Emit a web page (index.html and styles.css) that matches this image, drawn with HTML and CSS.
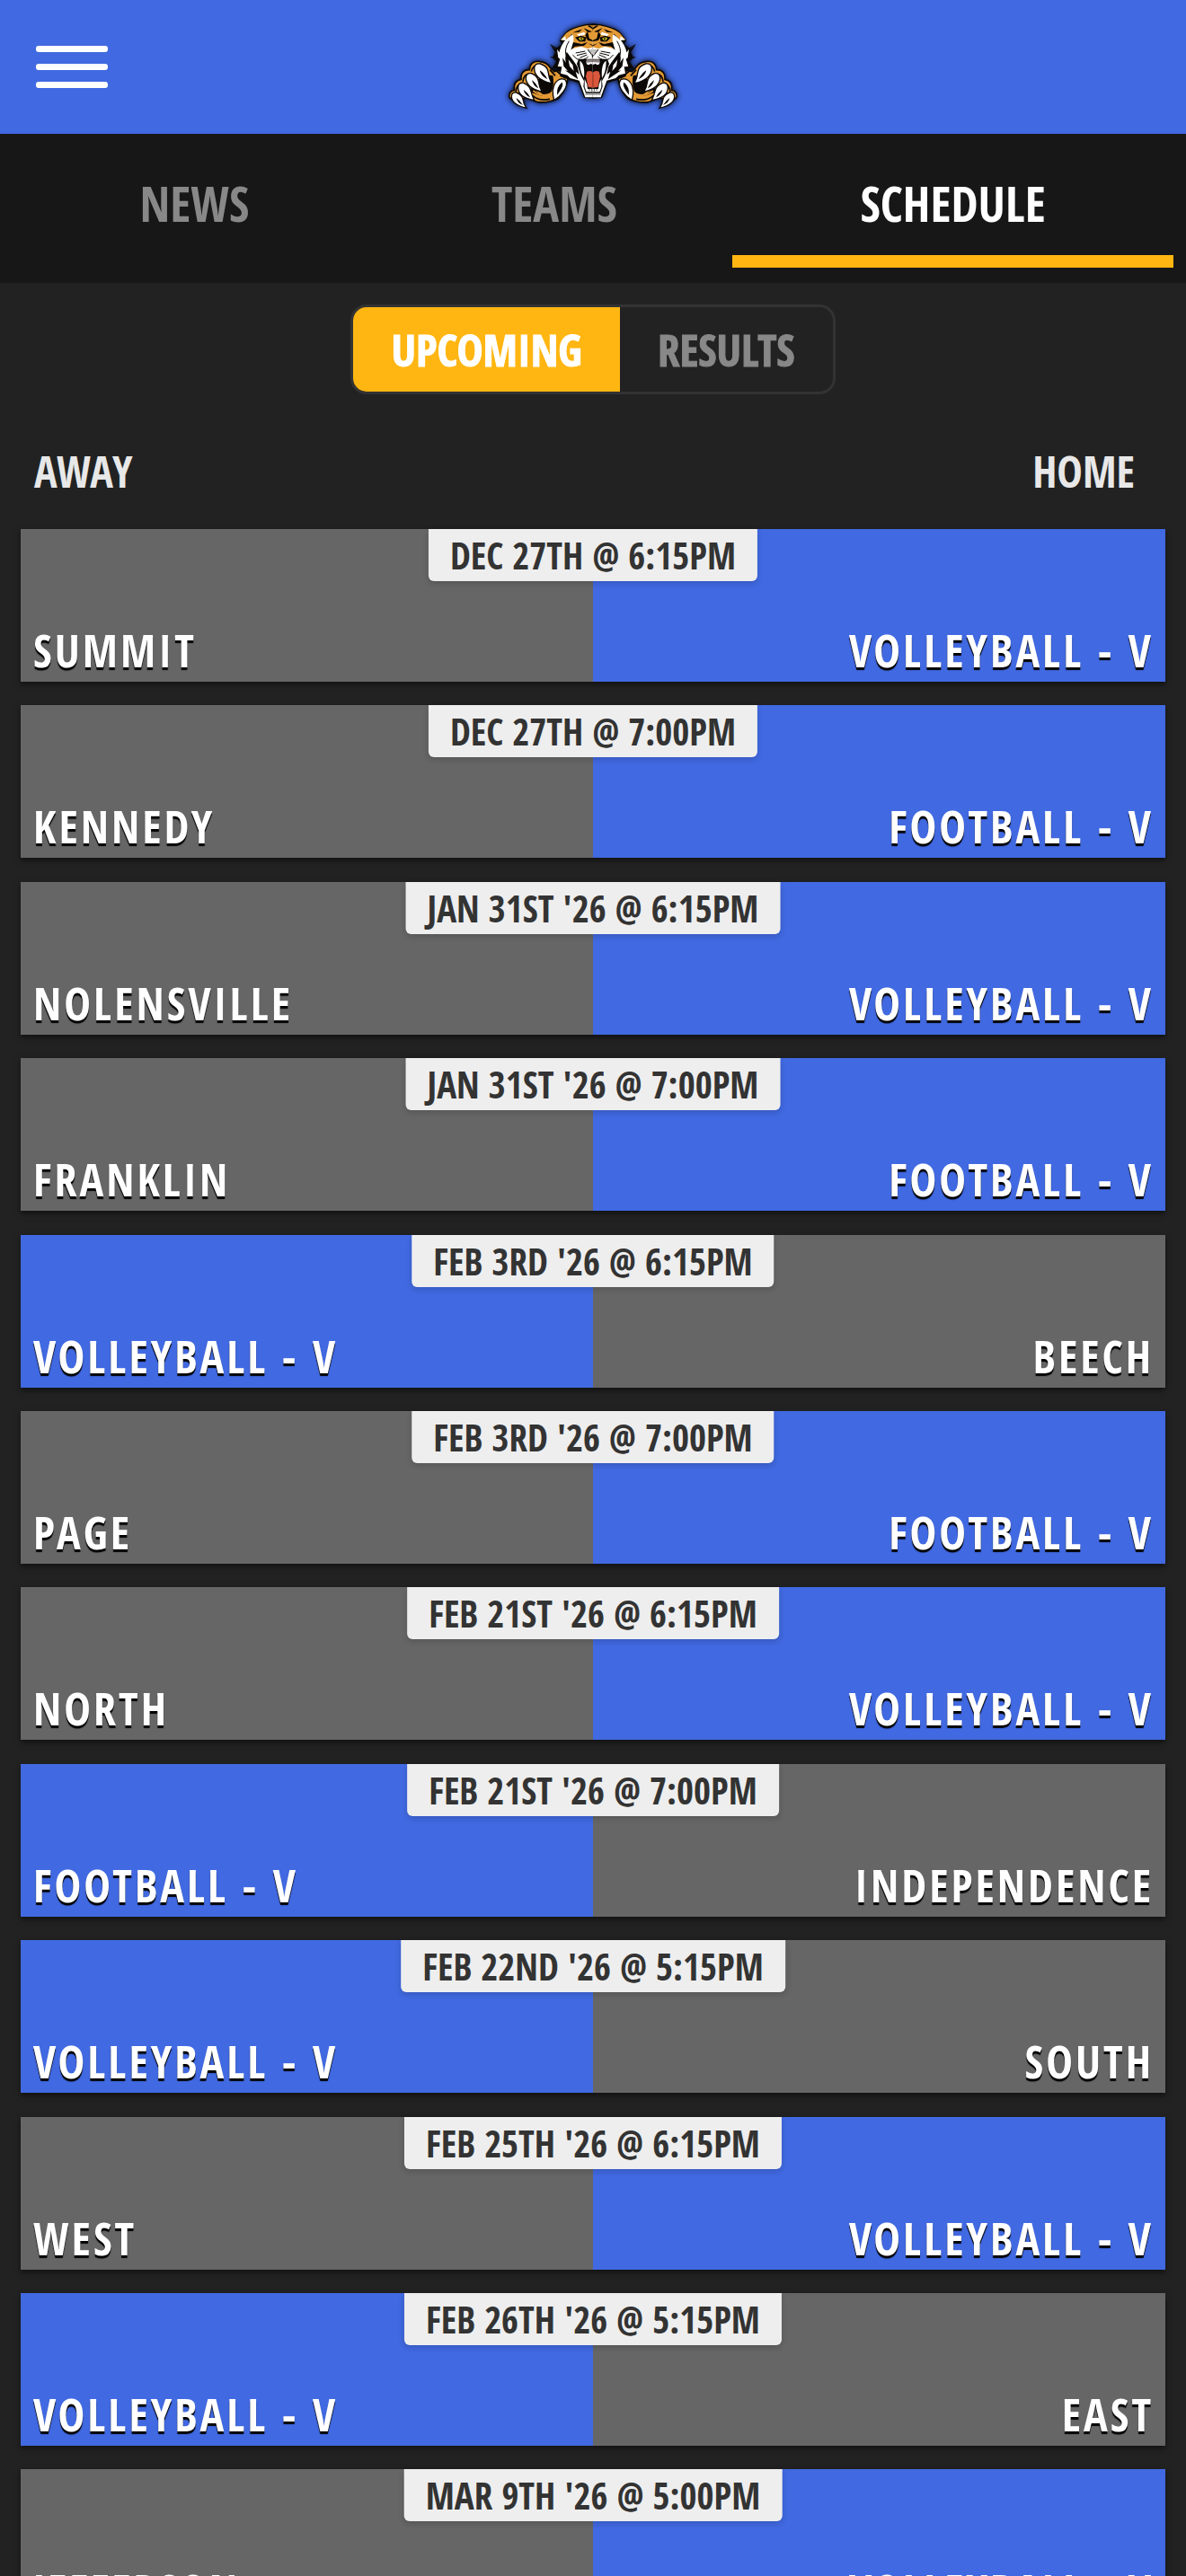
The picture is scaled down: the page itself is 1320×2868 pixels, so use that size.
FILE: index.html
```
<!DOCTYPE html>
<html lang="en">
<head>
    <meta charset="UTF-8">
    <meta name="viewport" content="width=device-width, initial-scale=1.0">
    <title>Schedule</title>
    <link rel="stylesheet" href="styles.css">
</head>
<body>

    <header class="topbar">
        <button type="button" class="menu-btn" aria-label="Open menu">
            <span class="menu-line"></span>
            <span class="menu-line"></span>
            <span class="menu-line"></span>
        </button>
        <a href="#" class="logo" aria-label="Home">
            <svg viewBox="0 0 660 390" aria-hidden="true">
                <defs>
                    <!-- one paw, mirrored for the other side -->
                    <g id="paw">
                        <path fill="#e39a35" stroke="#0b0806" stroke-width="5" d="M50 296 Q50 276 68 274 Q62 244 90 238 Q88 206 118 206 Q120 176 150 178 Q176 180 188 200 L200 212 L222 208 L246 236 Q240 276 214 302 Q176 318 146 314 L108 300 L70 308 Q54 306 50 296Z"/>
                        <path fill="#0b0806" d="M170 222 L196 226 Q202 250 192 278 Q172 298 148 290 L118 280 L130 250 Z"/>
                        <path fill="none" stroke="#0b0806" stroke-width="5" d="M128 292 Q150 312 186 304 M124 212 Q130 188 152 190 M96 246 Q98 222 116 220 M72 280 Q76 254 90 254 M210 212 L238 234 M186 206 L204 226"/>
                        <path fill="none" stroke="#e39a35" stroke-width="5" d="M130 276 Q156 298 190 286 M140 274 L174 300"/>
                        <g fill="#fff" stroke="#0b0806" stroke-width="4">
                            <path d="M134 202 Q134 184 154 186 Q178 194 180 212 Q182 232 192 252 Q160 244 146 230 Q134 218 134 202Z"/>
                            <path d="M106 234 Q106 216 124 218 Q144 226 148 244 Q150 262 160 280 Q130 272 118 260 Q106 248 106 234Z"/>
                            <path d="M80 266 Q80 248 98 250 Q118 258 122 274 Q126 292 134 308 Q104 302 92 292 Q80 280 80 266Z"/>
                            <path d="M58 296 Q58 280 74 282 Q92 288 96 304 Q98 320 108 334 Q82 328 70 318 Q58 308 58 296Z"/>
                            <path d="M200 308 Q190 270 204 250 Q220 230 238 240 Q248 254 232 278 Q220 296 200 308Z"/>
                        </g>
                        <path fill="#0b0806" d="M152 208 Q168 218 178 238 Q156 228 152 208Z M126 240 Q140 250 148 268 Q130 260 126 240Z M98 272 Q112 282 120 298 Q102 290 98 272Z M74 300 Q86 308 96 324 Q76 316 74 300Z M226 248 Q236 256 210 290 Q208 262 226 248Z"/>
                    </g>
                    <!-- left half of the face -->
                    <g id="face">
                        <path fill="#0b0806" d="M332 52 L306 54 Q250 66 236 84 L218 108 L226 120 L206 136 L188 124 L204 148 L194 166 L208 178 L194 200 L216 204 L220 228 L250 240 L282 250 L300 300 L332 302Z"/>
                        <path fill="#fff" d="M332 100 L262 88 L240 104 Q222 124 218 148 L210 138 L214 166 L220 170 L212 196 L226 196 L222 218 L244 224 L254 234 L284 242 L304 298 L332 298Z"/>
                        <path fill="#e39a35" d="M332 58 L308 58 Q258 68 240 84 L222 106 L238 108 L260 86 Q270 92 260 136 L290 128 L312 136 L332 130Z"/>
                        <path fill="#fff" d="M222 106 L238 94 L240 108Z M276 88 L300 80 L306 88 L284 94Z"/>
                        <path fill="#0b0806" d="M312 60 L332 72 L332 66 L318 58Z M298 66 L316 74 L332 80 L312 80Z M262 82 L294 70 L284 80 Z M270 98 L290 92 L308 98 L304 112 L284 112Z M312 78 L318 102 L332 108 L332 112 L312 108 L304 90Z M264 114 L292 120 L312 114 L300 126 L270 128 L256 140Z M314 118 L332 124 L332 128Z"/>
                        <path fill="#d9c91e" d="M282 100 Q292 94 300 102 Q294 110 286 107Z"/>
                        <circle cx="291" cy="103" r="3" fill="#0b0806"/>
                        <path fill="#fff" d="M332 138 L312 140 Q276 138 264 156 Q278 172 300 174 L332 160Z"/>
                        <path fill="#bcbcbc" d="M332 138 L312 138 L322 152 L332 154Z"/>
                        <path fill="none" stroke="#0b0806" stroke-width="3" d="M312 138 L324 154 L332 162 M304 144 L272 150 M308 150 L276 158 M310 156 L286 166 M332 154 L332 166 M314 162 Q300 178 276 170 L262 156 M250 110 Q234 136 240 158 M188 122 L212 136 M188 164 L214 168 M190 204 L218 196"/>
                        <path fill="#0b0806" d="M242 146 Q234 168 240 182 L228 166 L232 194 L246 210 L236 208 L280 238 L272 212 L284 222 L278 196 L266 178 Z"/>
                        <path fill="#fff" d="M248 172 L262 190 L266 210 L252 194Z"/>
                        <path fill="#0b0806" d="M332 170 L282 170 L276 186 L290 226 L300 244 L298 262 L306 284 L332 284Z"/>
                        <path fill="#8c8281" d="M332 172 L308 172 L306 184 L332 182Z"/>
                        <path fill="#fff" d="M308 182 L332 180 L332 190 L322 186 L316 190 L310 188Z M286 176 Q304 186 300 234 Q286 214 286 176Z M302 236 L310 254 L312 270 L332 270 L332 280 L308 280 L302 264Z"/>
                        <path fill="#d9573c" d="M332 216 Q322 206 310 212 L306 228 L314 264 L332 266Z"/>
                        <path fill="none" stroke="#0b0806" stroke-width="2" d="M318 268 L318 276 M326 270 L326 278 M304 288 L332 288"/>
                    </g>
                </defs>
                <use href="#paw"/>
                <use href="#paw" transform="translate(660 0) scale(-1 1)"/>
                <use href="#face"/>
                <use href="#face" transform="translate(660 0) scale(-1 1)"/>
                <path fill="#e39a35" d="M320 82 L330 76 L340 82 L344 96 L330 106 L316 96Z"/>
                <path fill="none" stroke="#a33724" stroke-width="3" d="M330 220 L330 262"/>
            </svg>
        </a>
    </header>

    <nav class="tabs">
        <a href="#" class="tab">NEWS</a>
        <a href="#" class="tab">TEAMS</a>
        <a href="#" class="tab active" aria-current="page">SCHEDULE</a>
    </nav>

    <main class="schedule">
        <div class="toggle">
            <button type="button" class="toggle-btn selected" aria-pressed="true">UPCOMING</button>
            <button type="button" class="toggle-btn" aria-pressed="false">RESULTS</button>
        </div>

        <div class="sides">
            <span>AWAY</span>
            <span>HOME</span>
        </div>

        <ul class="games">
            <li class="game">
                <div class="team">SUMMIT</div>
                <div class="team home ours">VOLLEYBALL - V</div>
                <time class="when">DEC 27TH @ 6:15PM</time>
            </li>
            <li class="game">
                <div class="team">KENNEDY</div>
                <div class="team home ours">FOOTBALL - V</div>
                <time class="when">DEC 27TH @ 7:00PM</time>
            </li>
            <li class="game">
                <div class="team">NOLENSVILLE</div>
                <div class="team home ours">VOLLEYBALL - V</div>
                <time class="when">JAN 31ST '26 @ 6:15PM</time>
            </li>
            <li class="game">
                <div class="team">FRANKLIN</div>
                <div class="team home ours">FOOTBALL - V</div>
                <time class="when">JAN 31ST '26 @ 7:00PM</time>
            </li>
            <li class="game">
                <div class="team ours">VOLLEYBALL - V</div>
                <div class="team home">BEECH</div>
                <time class="when">FEB 3RD '26 @ 6:15PM</time>
            </li>
            <li class="game">
                <div class="team">PAGE</div>
                <div class="team home ours">FOOTBALL - V</div>
                <time class="when">FEB 3RD '26 @ 7:00PM</time>
            </li>
            <li class="game">
                <div class="team">NORTH</div>
                <div class="team home ours">VOLLEYBALL - V</div>
                <time class="when">FEB 21ST '26 @ 6:15PM</time>
            </li>
            <li class="game">
                <div class="team ours">FOOTBALL - V</div>
                <div class="team home">INDEPENDENCE</div>
                <time class="when">FEB 21ST '26 @ 7:00PM</time>
            </li>
            <li class="game">
                <div class="team ours">VOLLEYBALL - V</div>
                <div class="team home">SOUTH</div>
                <time class="when">FEB 22ND '26 @ 5:15PM</time>
            </li>
            <li class="game">
                <div class="team">WEST</div>
                <div class="team home ours">VOLLEYBALL - V</div>
                <time class="when">FEB 25TH '26 @ 6:15PM</time>
            </li>
            <li class="game">
                <div class="team ours">VOLLEYBALL - V</div>
                <div class="team home">EAST</div>
                <time class="when">FEB 26TH '26 @ 5:15PM</time>
            </li>
            <li class="game">
                <div class="team">JEFFERSON</div>
                <div class="team home ours">VOLLEYBALL - V</div>
                <time class="when">MAR 9TH '26 @ 5:00PM</time>
            </li>
        </ul>
    </main>

</body>
</html>
```
FILE: styles.css
```
* {
    box-sizing: border-box;
}
body {
    margin: 0;
    height: 100vh;
    display: flex;
    flex-direction: column;
    background-color: #222;
    color: #fff;
    font-family: "Open Sans Condensed", "Open Sans", sans-serif;
    font-weight: bold;
}
a {
    color: inherit;
    text-decoration: none;
}
button {
    font: inherit;
    color: inherit;
    background: none;
    border: none;
    cursor: pointer;
}

/* Top bar */
.topbar {
    display: grid;
    grid-template-columns: 1fr auto 1fr;
    align-items: center;
    flex-shrink: 0;
    padding: 9px 40px 10px;
    background-color: #4169e1;
}
.menu-btn {
    display: flex;
    flex-direction: column;
    gap: 13px;
    width: 80px;
    padding: 0;
}
.menu-line {
    height: 7px;
    border-radius: 3px;
    background-color: #fff;
}
.logo svg {
    display: block;
    width: 220px;
    height: 130px;
    filter: drop-shadow(0 0 3px #000);
}

/* Tabs */
.tabs {
    display: grid;
    grid-template-columns: 404fr 396fr 490fr;
    flex-shrink: 0;
    padding: 0 14px 17px;
    background-color: #171717;
}
.tab {
    padding: 41px 0 22px;
    border-bottom: 14px solid transparent;
    color: #888;
    font-size: 54px;
    line-height: 72px;
    text-align: center;
}
.tab.active {
    color: #fff;
    border-bottom-color: #ffb612;
}

/* Schedule */
.schedule {
    flex: 1;
    min-height: 0;
    overflow-y: auto;
    scrollbar-width: none;
    padding: 24px 23px;
}
.toggle {
    display: flex;
    width: fit-content;
    margin: 0 auto;
    overflow: hidden;
    border: 3px solid #333;
    border-radius: 18px;
}
.toggle-btn {
    padding: 0 42px;
    color: #888;
    font-size: 49px;
    line-height: 94px;
    -webkit-text-stroke: 1px currentColor;
}
.toggle-btn.selected {
    color: #fff;
    background-color: #ffb612;
}
.sides {
    display: flex;
    justify-content: space-between;
    padding: 54px 34px 32px 15px;
    color: #e8e8e8;
    font-size: 48px;
    line-height: 64px;
}
.games {
    display: flex;
    flex-direction: column;
    gap: 2vw;
    margin: 0;
    padding: 0;
    list-style: none;
}
.game {
    position: relative;
    display: flex;
    flex-shrink: 0;
    height: 170px;
    box-shadow: 0 3px 6px rgba(0, 0, 0, 0.5);
}
.team {
    display: flex;
    flex: 1;
    align-items: flex-end;
    padding: 0 13px 8px 14px;
    background-color: #666;
    font-size: 50px;
    line-height: 54px;
    letter-spacing: 3px;
    text-shadow: 0 3px 1px #000;
}
.team.home {
    justify-content: flex-end;
}
.team.ours {
    background-color: #4169e1;
}

/* Date badge hangs over both halves */
.when {
    position: absolute;
    top: 0;
    left: 50%;
    transform: translateX(-50%);
    padding: 0 24px;
    border-radius: 0 0 6px 6px;
    background-color: #eee;
    color: #333;
    font-size: 41px;
    line-height: 58px;
    white-space: nowrap;
    box-shadow: 0 3px 6px rgba(0, 0, 0, 0.15);
}
```
